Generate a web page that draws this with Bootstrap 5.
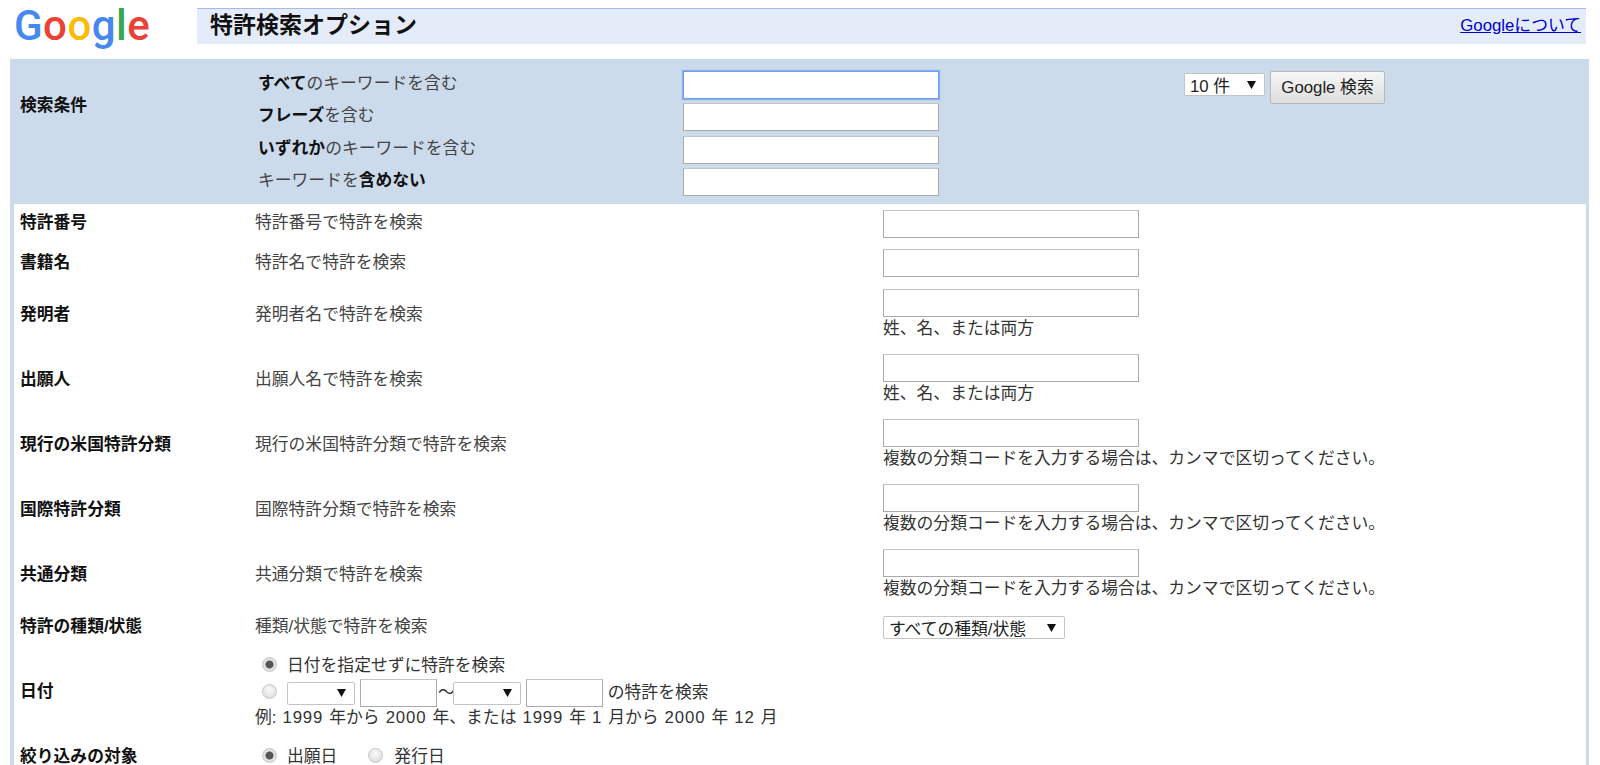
<!DOCTYPE html>
<html lang="ja">
<head>
<meta charset="utf-8">
<title>特許検索オプション</title>
<link href="https://cdn.jsdelivr.net/npm/bootstrap@5.3.0/dist/css/bootstrap.min.css" rel="stylesheet">
<style>
html,body{height:765px;overflow:hidden;background:#fff}
body{font-family:"Liberation Sans","Noto Sans CJK JP",sans-serif;font-size:16.8px;color:#333;line-height:1.3}
.hdr{height:59px;padding:8px 14px 0 14px}
.logo{width:183px;font-family:Roboto,sans-serif;font-weight:500;font-size:42px;line-height:44px;letter-spacing:.5px;margin-top:-4px}
.lg-b{color:#4688f1}.lg-r{color:#ea4335}.lg-y{color:#fbbc05}.lg-g{color:#34a853}
.titlebar{background:#e5ecf9;border-top:1px solid #a9b8e6;height:36px;width:1389px;padding:0 5px 2px 13px}
.titlebar h1{font-size:23px;font-weight:700;color:#111;margin:0}
.titlebar a{color:#00c;font-size:16.8px}
.frame{background:#cbdbeb;margin:0 11px 0 10px;padding:0 3px 0 4px;height:900px}
.cond{height:145px;padding:12px 0 0 6px}
.lab{flex:0 0 auto;font-weight:700;color:#111;font-size:16.8px}
.cond .lab{width:238px;margin-top:24px}
.q{width:425px;color:#444;padding-top:2px}
.q b{color:#111}
.qrow{height:32.4px}
.txt{display:block;border:1px solid #aaa;border-top-color:#c4c4c4;background:#fff;height:28px;padding:0 4px;border-radius:0;outline:0}
.w255{width:256px}
.txt.on{border:1px solid #6d9eee;box-shadow:0 0 1px 1px #8ab0f3}
.sel{appearance:none;-webkit-appearance:none;border:1px solid #c4c4c4;border-radius:2px;background:#fff url("data:image/svg+xml,%3Csvg xmlns='http://www.w3.org/2000/svg' width='9' height='8'%3E%3Cpath d='M0 0h9L4.5 8z' fill='%23111'/%3E%3C/svg%3E") no-repeat right 8px center;font-family:inherit;font-size:16.8px;color:#222;padding:2px 5px 0;height:23px;line-height:21px}
.s82{width:81px;margin-top:2px}
.s182{width:182px;margin-top:4px}
.gobtn{width:115px;height:33px;margin:0 0 0 5px;border:1px solid #b8b8b8;border-radius:2px;background:linear-gradient(#f6f6f6,#dedede);color:#222;font-size:16.8px;padding:0;font-family:inherit}
.topright{margin-left:245px;height:40px}
.inner{background:#fff;padding:4px 0 0 6px;height:750px}
.rw{padding-bottom:9px}
.h40{height:40px}.h39{height:39px}.tall{height:65px}
.inner .lab{width:235px}
.inner .desc{width:628px;color:#444}
.ctl{align-self:flex-start;margin-top:2px}
.note{color:#333;line-height:23px;height:26px}
.rwtype{height:29px}
.rwdate{height:102px}
.rwlast{height:28px}
.rad{appearance:none;-webkit-appearance:none;width:15px;height:15px;border-radius:50%;border:1px solid #c6c6c6;background:radial-gradient(circle at 50% 35%,#fafafa,#d8d8d8);flex:0 0 auto;margin:0 0 3px}
.rad:checked{background:radial-gradient(circle,#555 0 3.5px,#e4e4e4 4.5px,#d6d6d6)}
.rad.mid{margin:0 10px 3px 7px}
.rad.far{margin:0 11px 3px 31px}
.s68{width:68px;padding:0}
.yr{width:77px;margin:0 1px 0 5px}
.tl{margin-right:-2px}
.t2{width:256px}
.ln2{padding-top:2px}
.exm{word-spacing:1.3px}
.dg{letter-spacing:.9px}
</style>
</head>
<body>
<header class="hdr d-flex">
  <div class="logo"><span class="lg-b">G</span><span class="lg-r">o</span><span class="lg-y">o</span><span class="lg-b">g</span><span class="lg-g">l</span><span class="lg-r">e</span></div>
  <div class="titlebar d-flex justify-content-between align-items-center">
    <h1>特許検索オプション</h1>
    <a href="#">Googleについて</a>
  </div>
</header>
<main class="frame">
  <section class="cond d-flex">
    <div class="lab">検索条件</div>
    <div>
      <div class="qrow d-flex"><div class="q"><b>すべて</b>のキーワードを含む</div><input class="txt w255 on" type="text"></div>
      <div class="qrow d-flex"><div class="q"><b>フレーズ</b>を含む</div><input class="txt w255" type="text"></div>
      <div class="qrow d-flex"><div class="q"><b>いずれか</b>のキーワードを含む</div><input class="txt w255" type="text"></div>
      <div class="qrow d-flex"><div class="q">キーワードを<b>含めない</b></div><input class="txt w255" type="text"></div>
    </div>
    <div class="topright d-flex align-items-start">
      <select class="sel s82"><option>10 件</option></select>
      <button class="gobtn" type="button">Google 検索</button>
    </div>
  </section>
  <section class="inner">
    <div class="rw h39 d-flex align-items-center"><div class="lab">特許番号</div><div class="desc">特許番号で特許を検索</div><div class="ctl"><input class="txt t2" type="text"></div></div>
    <div class="rw h40 d-flex align-items-center"><div class="lab">書籍名</div><div class="desc">特許名で特許を検索</div><div class="ctl"><input class="txt t2" type="text"></div></div>
    <div class="rw tall d-flex align-items-center"><div class="lab">発明者</div><div class="desc">発明者名で特許を検索</div><div class="ctl"><input class="txt t2" type="text"><div class="note">姓、名、または両方</div></div></div>
    <div class="rw tall d-flex align-items-center"><div class="lab">出願人</div><div class="desc">出願人名で特許を検索</div><div class="ctl"><input class="txt t2" type="text"><div class="note">姓、名、または両方</div></div></div>
    <div class="rw tall d-flex align-items-center"><div class="lab">現行の米国特許分類</div><div class="desc">現行の米国特許分類で特許を検索</div><div class="ctl"><input class="txt t2" type="text"><div class="note">複数の分類コードを入力する場合は、カンマで区切ってください。</div></div></div>
    <div class="rw tall d-flex align-items-center"><div class="lab">国際特許分類</div><div class="desc">国際特許分類で特許を検索</div><div class="ctl"><input class="txt t2" type="text"><div class="note">複数の分類コードを入力する場合は、カンマで区切ってください。</div></div></div>
    <div class="rw tall d-flex align-items-center"><div class="lab">共通分類</div><div class="desc">共通分類で特許を検索</div><div class="ctl"><input class="txt t2" type="text"><div class="note">複数の分類コードを入力する場合は、カンマで区切ってください。</div></div></div>
    <div class="rwtype d-flex align-items-center"><div class="lab">特許の種類/状態</div><div class="desc">種類/状態で特許を検索</div><div><select class="sel s182"><option>すべての種類/状態</option></select></div></div>
    <div class="rwdate d-flex align-items-center"><div class="lab">日付</div>
      <div>
        <div class="d-flex align-items-center"><input class="rad mid" type="radio" name="d" checked><span>日付を指定せずに特許を検索</span></div>
        <div class="d-flex align-items-center ln2"><input class="rad mid" type="radio" name="d"><select class="sel s68"></select><input class="txt yr" type="text"><span class="tl">〜</span><select class="sel s68"></select><input class="txt yr" type="text"><span class="ms-1">の特許を検索</span></div>
        <div class="exm">例: <span class="dg">1999</span> 年から <span class="dg">2000</span> 年、または <span class="dg">1999</span> 年 <span class="dg">1</span> 月から <span class="dg">2000</span> 年 <span class="dg">12</span> 月</div>
      </div>
    </div>
    <div class="rwlast d-flex align-items-center"><div class="lab">絞り込みの対象</div>
      <div class="d-flex align-items-center"><input class="rad mid" type="radio" name="e" checked><span>出願日</span><input class="rad far" type="radio" name="e"><span>発行日</span></div>
    </div>
  </section>
</main>
<script src="https://cdn.jsdelivr.net/npm/bootstrap@5.3.0/dist/js/bootstrap.bundle.min.js"></script>
</body>
</html>
